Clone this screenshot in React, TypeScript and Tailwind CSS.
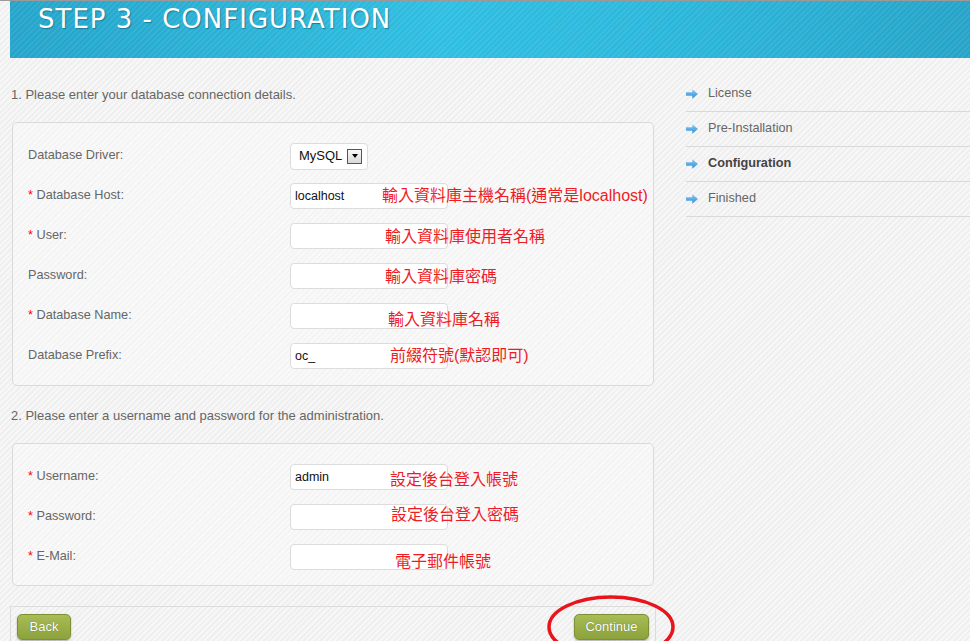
import type { ReactNode } from 'react';

const stripes =
  'bg-[repeating-linear-gradient(135deg,#f7f7f7_0px,#f7f7f7_2px,#efefef_2px,#efefef_4px)]';

type Row = {
  label: string;
  req?: boolean;
  value?: string;
  select?: boolean;
  note?: string;
  noteCls?: string;
};

const dbRows: Row[] = [
  { label: 'Database Driver:', select: true },
  {
    label: 'Database Host:',
    req: true,
    value: 'localhost',
    note: '輸入資料庫主機名稱(通常是localhost)',
    noteCls: 'left-[92px] top-[3px]',
  },
  { label: 'User:', req: true, note: '輸入資料庫使用者名稱', noteCls: 'left-[95px] top-[4px]' },
  { label: 'Password:', note: '輸入資料庫密碼', noteCls: 'left-[95px] top-[4px]' },
  { label: 'Database Name:', req: true, note: '輸入資料庫名稱', noteCls: 'left-[98px] top-[7px]' },
  {
    label: 'Database Prefix:',
    value: 'oc_',
    note: '前綴符號(默認即可)',
    noteCls: 'left-[100px] top-[3px]',
  },
];

const adminRows: Row[] = [
  { label: 'Username:', req: true, value: 'admin', note: '設定後台登入帳號', noteCls: 'left-[100px] top-[6px]' },
  { label: 'Password:', req: true, note: '設定後台登入密碼', noteCls: 'left-[101px] top-[1px]' },
  { label: 'E-Mail:', req: true, note: '電子郵件帳號', noteCls: 'left-[105px] top-[8px]' },
];

const steps = [
  { name: 'License' },
  { name: 'Pre-Installation' },
  { name: 'Configuration', active: true },
  { name: 'Finished' },
];

export default function App() {
  return (
    <div
      className={`relative h-[641px] w-[970px] overflow-hidden border-t border-[#9a9a9a] ${stripes} font-['Liberation_Sans',Arial,sans-serif] text-[12.7px] text-[#666]`}
    >
      {/* 頁首藍條 */}
      <div className="ml-[10px] h-[57px] bg-[repeating-linear-gradient(135deg,rgba(255,255,255,0.07)_0px,rgba(255,255,255,0.07)_2px,transparent_2px,transparent_4px),linear-gradient(90deg,#24a4ca,#2ebee1_45%,#2ab6da_70%,#25a3c8)] pt-[3px] pl-[28px]">
        <h1 className="font-['DejaVu_Sans',Verdana,sans-serif] text-[26px] leading-[30px] tracking-[1px] text-white [text-shadow:1px_1px_1px_#177c98]">
          STEP 3 - CONFIGURATION
        </h1>
      </div>

      <div className="flex">
        <div className="ml-[10px] w-[646px] shrink-0 pt-[29px]">
          <p className="pl-[1px] text-[13px] leading-[15px]">1. Please enter your database connection details.</p>
          <FieldBox className="mt-[20px] pt-[13px] pb-[9px]">
            {dbRows.map((r) => (
              <FormRow key={r.label} row={r} />
            ))}
          </FieldBox>

          <p className="mt-[22px] pl-[1px] text-[13px] leading-[15px]">
            2. Please enter a username and password for the administration.
          </p>
          <FieldBox className="mt-[20px] pt-[13px] pb-[8px]">
            {adminRows.map((r) => (
              <FormRow key={r.label} row={r} />
            ))}
          </FieldBox>

          <div className="relative mt-[20px] flex h-[60px] items-start justify-between border-x border-t border-[#dcdcdc] px-[6px] pt-[7px]">
            <GreenButton className="w-[54px]">Back</GreenButton>
            <GreenButton className="w-[75px]">Continue</GreenButton>
            {/* 紅圈標註 */}
            <svg
              className="pointer-events-none absolute top-[-13px] left-[535px]"
              width="132"
              height="70"
              viewBox="0 0 132 70"
              aria-hidden
            >
              <ellipse cx="65" cy="33" rx="62" ry="30" fill="none" stroke="#e8141c" strokeWidth="3.5" />
            </svg>
          </div>
        </div>

        {/* 右側步驟列表 */}
        <ul className="ml-[30px] flex-1 pt-[19px]">
          {steps.map((s) => (
            <li
              key={s.name}
              className="flex h-[35px] items-center gap-[10px] border-b border-[#d9d9d9]"
            >
              <ArrowGlyph />
              <span className={s.active ? 'font-bold text-[#444]' : ''}>{s.name}</span>
            </li>
          ))}
        </ul>
      </div>
    </div>
  );
}

function FieldBox({ children, className }: { children: ReactNode; className?: string }) {
  return (
    <div
      className={`ml-[2px] w-[642px] rounded-[5px] border border-[#dadada] bg-white/30 px-[15px] ${className ?? ''}`}
    >
      {children}
    </div>
  );
}

function FormRow({ row }: { row: Row }) {
  return (
    <div className="flex h-[40px] items-center">
      <span className="w-[262px] shrink-0">
        {row.req && <span className="text-[#f00]">* </span>}
        {row.label}
      </span>
      {row.select ? (
        <div className="flex h-[27px] w-[78px] items-center rounded-[4px] border border-[#dcdcdc] bg-white pl-[8px] text-[13px] text-[#111]">
          MySQL
          <span className="ml-[5px] flex h-[15px] w-[15px] items-center justify-center border border-[#555] bg-[linear-gradient(#fafafa,#d8d8d8)]">
            <span className="border-x-[3.5px] border-t-[4px] border-x-transparent border-t-black" />
          </span>
        </div>
      ) : (
        <div className="relative">
          <div className="flex h-[26px] w-[158px] items-center rounded-[4px] border border-[#dcdcdc] bg-white pl-[4px] text-[12.5px] text-[#111]">
            {row.value}
          </div>
          {row.note && (
            <span
              className={`absolute ${row.noteCls} font-['Liberation_Sans','Noto_Sans_CJK_TC',sans-serif] text-[16px] leading-[20px] whitespace-nowrap text-[#ee1c25]`}
            >
              {row.note}
            </span>
          )}
        </div>
      )}
    </div>
  );
}

function GreenButton({ children, className }: { children: ReactNode; className?: string }) {
  return (
    <button
      type="button"
      className={`h-[26px] rounded-[5px] border border-[#7d9034] bg-[linear-gradient(#a9bc55,#8ca23c)] text-[13px] text-white shadow-[0_1px_2px_rgba(0,0,0,0.3)] [text-shadow:0_0_1px_#556a1a] ${className ?? ''}`}
    >
      {children}
    </button>
  );
}

function ArrowGlyph() {
  return (
    <svg width="12" height="10" viewBox="0 0 12 10" className="shrink-0" aria-hidden>
      <defs>
        <linearGradient id="arr" x1="0" y1="0" x2="0" y2="1">
          <stop offset="0" stopColor="#8ccaf2" />
          <stop offset="1" stopColor="#2d8ed6" />
        </linearGradient>
      </defs>
      <path d="M0 3.3H6.3V0.3L12 5L6.3 9.7V6.7H0Z" fill="url(#arr)" />
    </svg>
  );
}
